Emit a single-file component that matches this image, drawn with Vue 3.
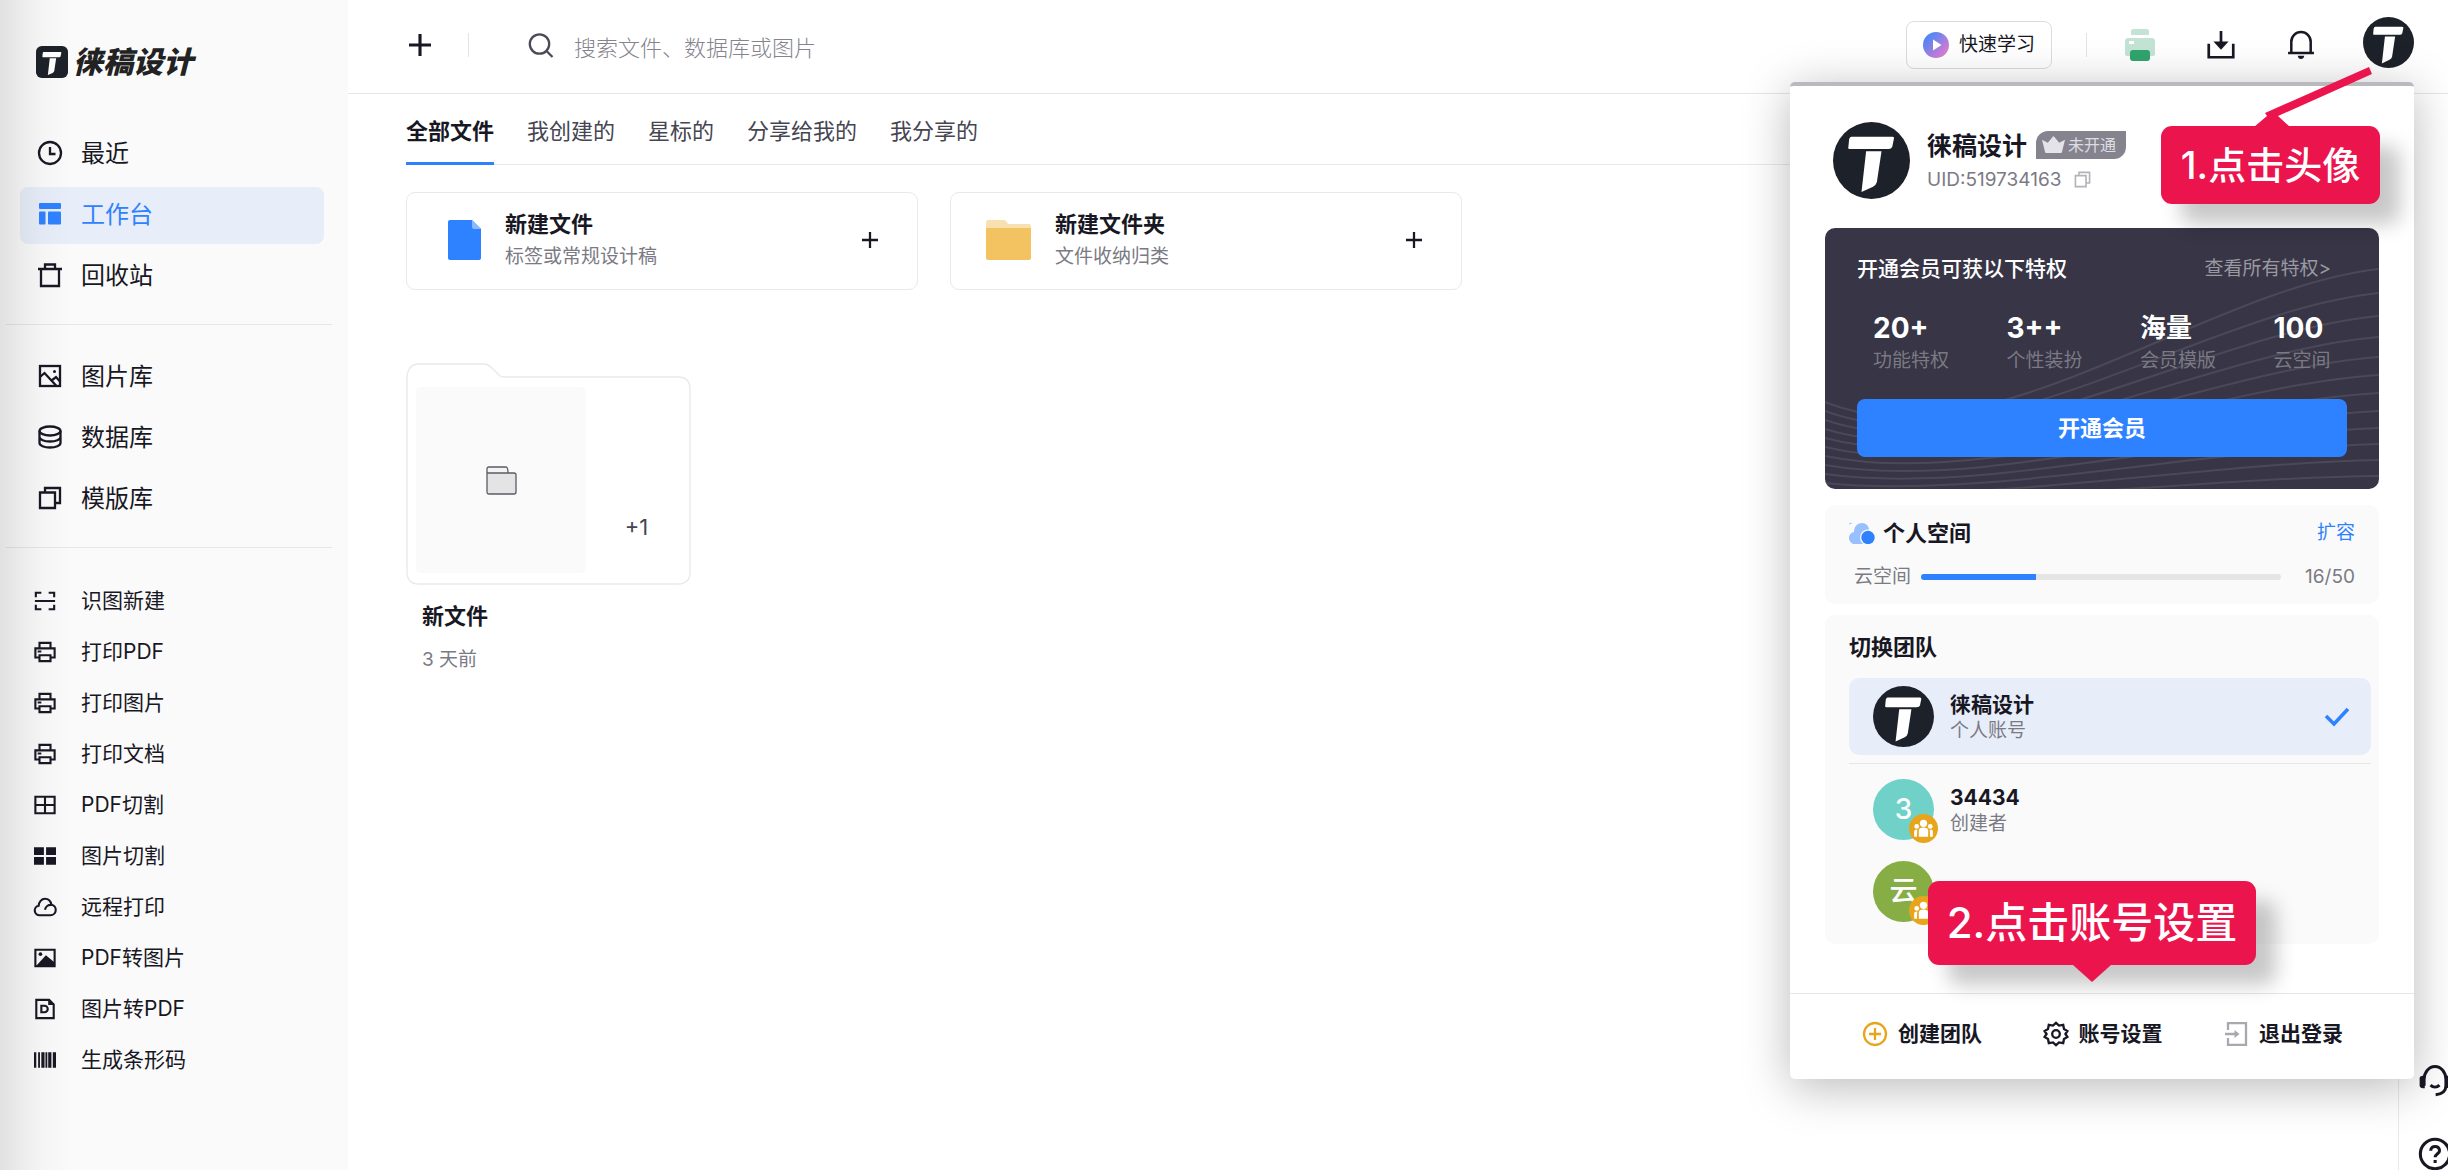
<script setup>
const icons = {
  clock: '<circle cx="12" cy="12" r="11"/><path d="M12 6v7h5.500"/>',
  board: '<g fill="currentColor" stroke="none"><rect x="1" y="1" width="22" height="6" rx="1"/><rect x="1" y="9.500" width="6.500" height="13" rx="1"/><rect x="10" y="9.500" width="13" height="13" rx="1"/></g>',
  trash: '<path d="M0 6h24M3 6v17h18V6M7 6V1.500h10V6"/>',
  image: '<rect x="2" y="2" width="20" height="20"/><path d="M2 13l4.500-4 12 13M13 17l5-4 4 4.500"/><circle cx="16.500" cy="7.500" r="1.500" fill="currentColor" stroke="none"/>',
  data: '<ellipse cx="12" cy="6" rx="10.500" ry="4.500"/><path d="M1.500 6v12c0 2.500 4.700 4.500 10.500 4.500s10.500-2 10.500-4.500V6M1.500 12c0 2.500 4.700 4.500 10.500 4.500s10.500-2 10.500-4.500"/>',
  copy: '<path d="M2 6.500h15V22H2zM7 6V2h15v15h-5"/>',
  scan: '<path d="M2 8V3h6M16 3h6v5M22 16v5h-6M8 21H2v-5M1 12h22"/>',
  printer: '<path d="M6 8V2h12v6M6 18H1.500V8h21v10H18M6 15.500h12V22H6zM4 11.500h4"/>',
  grid: '<path d="M1.500 3h21v18h-21zM12 3v18M1.500 12h21"/>',
  blocks: '<path fill="currentColor" stroke="none" d="M0 2.500h10.800v8.500H0zM13.200 2.500H24v8.500H13.200zM0 13.200h10.800v8.300H0zM13.200 13.200H24v8.300H13.200z"/>',
  cloud: '<path d="M6 21a5.200 5.200 0 0 1-1-10.300C5.300 6.500 8.200 3 12 3c3.600 0 6.200 2.500 7 6.500A5.800 5.800 0 0 1 18 21zM12 15c.5-3.500 3.500-5.500 7-5.300"/>',
  photo: '<path d="M1.500 3h21v18h-21z"/><path d="M2 21l5-5.500 6-6.500 9.500 8v4z" fill="currentColor" stroke="none"/><circle cx="7" cy="7.800" r="2" fill="currentColor" stroke="none"/>',
  pdf: '<path d="M2.500 2h14l5 5v15h-19z"/><path d="M8 8.500h3.500a3.500 3.500 0 0 1 0 7H8z"/><path d="M15.500 1.500l6.500 6h-6.500z" fill="currentColor" stroke="none"/>',
  barcode: '<path fill="currentColor" stroke="none" d="M0 3.500h2.500v17H0zM4.500 3.500h2v17h-2zM8 3.500h3.500v17H8zM12.500 3.500h2v17h-2zM15.500 3.500h3.500v17h-3.500zM20.500 3.500H24v17h-3.500z"/>',
  plus: '<path d="M12 0v24M0 12h24"/>',
  search: '<circle cx="10.500" cy="11" r="9.700"/><path d="M17.500 18l6 6"/>',
  download: '<path d="M1.500 11v11.500h21V11M12 0v10"/><path d="M5.500 9h13L12 16z" fill="currentColor" stroke="none"/>',
  bell: '<path d="M0 20.500h24M3 20V10a9 9 0 0 1 18 0v10"/><path d="M9 23h6q-.5 3-3 3t-3-3z" fill="currentColor" stroke="none"/>',
  check: '<path d="M1 11l8 8L23 4"/>',
  addCircle: '<circle cx="12" cy="12" r="11"/><path d="M12 6v12M6 12h12"/>',
  gear: '<path d="M12 .8l3 2.800 4.200-.8.800 4.200 3.400 2-2 3 2 3-3.400 2-.8 4.200-4.200-.8-3 2.800-3-2.800-4.200.8-.8-4.200-3.400-2 2-3-2-3L4 7l.8-4.200 4.200.8z"/><circle cx="12" cy="12" r="3.800"/>',
  exit: '<path d="M4 8V1.200h18v21.600H4V16M1 12h13"/><path d="M10.500 8l5 4-5 4z" fill="currentColor" stroke="none"/>',
  headset: '<path d="M3.500 17v-5a8.500 10 0 0 1 17 0v5c0 4-3 6.500-8 7M8.500 16.500c2 2 5 2 7 0"/><path d="M0 11q0-2 4-2v10q-4 0-4-2zM24 11q0-2-4-2v10q4 0 4-2z" fill="currentColor" stroke="none"/>',
  help: '<circle cx="12" cy="12" r="11"/><path d="M8.800 9.500c0-4.200 6.600-4.200 6.600 0 0 2.300-3.300 2.300-3.300 5M12.100 16.500v2.200"/>',
  team: '<g fill="currentColor" stroke="none"><circle cx="12" cy="7" r="3.500"/><circle cx="5.500" cy="10" r="2.300"/><circle cx="18.500" cy="10" r="2.300"/><path d="M7.500 20v-6q0-3 4.500-3t4.500 3v6zM3 20v-5q0-2 3-2l-.3 7zM21 20v-5q0-2-3-2l.3 7z"/></g>'
}

const mainNav = [
  { icon: 'clock', label: '最近' },
  { icon: 'board', label: '工作台', active: true },
  { icon: 'trash', label: '回收站' }
]
const libNav = [
  { icon: 'image', label: '图片库' },
  { icon: 'data', label: '数据库' },
  { icon: 'copy', label: '模版库' }
]
const tools = [
  { icon: 'scan', label: '识图新建' },
  { icon: 'printer', label: '打印PDF' },
  { icon: 'printer', label: '打印图片' },
  { icon: 'printer', label: '打印文档' },
  { icon: 'grid', label: 'PDF切割' },
  { icon: 'blocks', label: '图片切割' },
  { icon: 'cloud', label: '远程打印' },
  { icon: 'photo', label: 'PDF转图片' },
  { icon: 'pdf', label: '图片转PDF' },
  { icon: 'barcode', label: '生成条形码' }
]
const tabs = ['全部文件', '我创建的', '星标的', '分享给我的', '我分享的']
const perks = [
  ['20+', '功能特权'],
  ['3++', '个性装扮'],
  ['海量', '会员模版'],
  ['100', '云空间']
]
const used = 16
const quota = 50

const rightEnds = [41, 65, 88, 109, 129, 147, 165, 183, 200, 216, 232, 248]
const waves = rightEnds.map((r, i) => {
  const l = 174 + i * 9
  const k = 1 - i / 12
  return `M0 ${l}C160 ${l + 66 * k} 380 ${r + 19 * k} 554 ${r}`
})
const mark = 'M24 19H77Q80 19 79 22L77 32Q76 35 72 35H22Q19 35 20 32L21 22Q22 19 24 19ZM43 38H63L57 78Q56 82 52 84L37 91Z'
</script>

<template>
  <div class="page">
    <aside class="sidebar">
      <div class="brand">
        <svg class="brand-mark" viewBox="0 0 100 100"><rect width="100" height="100" rx="18" fill="#1d2129" /><path :d="mark" fill="#fff" /></svg>
        <span class="brand-name">徕稿设计</span>
      </div>
      <nav class="nav">
        <a v-for="n in mainNav" :key="n.label" href="#" class="nav-item" :class="{ active: n.active }">
          <svg class="icon" viewBox="0 0 24 24" v-html="icons[n.icon]"></svg><span>{{ n.label }}</span>
        </a>
      </nav>
      <hr class="rule" />
      <nav class="nav">
        <a v-for="n in libNav" :key="n.label" href="#" class="nav-item">
          <svg class="icon" viewBox="0 0 24 24" v-html="icons[n.icon]"></svg><span>{{ n.label }}</span>
        </a>
      </nav>
      <hr class="rule" />
      <nav class="tools">
        <a v-for="n in tools" :key="n.label" href="#" class="tool">
          <svg class="icon" viewBox="0 0 24 24" v-html="icons[n.icon]"></svg><span>{{ n.label }}</span>
        </a>
      </nav>
    </aside>

    <div class="main">
      <header class="topbar">
        <button class="plain" aria-label="新建"><svg class="icon add" viewBox="0 0 24 24" v-html="icons.plus"></svg></button>
        <i class="bar first"></i>
        <label class="search">
          <svg class="icon" viewBox="0 0 24 24" v-html="icons.search"></svg>
          <input type="text" placeholder="搜索文件、数据库或图片" />
        </label>
        <button class="learn">
          <svg viewBox="0 0 26 26">
            <defs><linearGradient id="play" x1="0" y1="0" x2="1" y2="1"><stop offset="0.150" stop-color="#4a86f7" /><stop offset="0.900" stop-color="#e67bd0" /></linearGradient></defs>
            <circle cx="13" cy="13" r="13" fill="url(#play)" /><path d="M10 7.500l8.500 5.500-8.500 5.500z" fill="#fff" />
          </svg>
          <span>快速学习</span>
        </button>
        <i class="bar"></i>
        <div class="actions">
          <button class="plain" aria-label="打印机">
            <svg class="green" viewBox="0 0 30 32"><path d="M6 2q0-2 2-2h14q2 0 2 2v4H6zM3 9h24q3 0 3 3v13q0 2-2 2H2q-2 0-2-2V12q0-3 3-3z" fill="#c3e4d5" /><rect x="4" y="12" width="5" height="3" fill="#fff" /><rect x="5" y="21" width="20" height="11" rx="3" fill="#30a46c" /></svg>
          </button>
          <button class="plain" aria-label="下载"><svg class="icon down" viewBox="0 0 24 24" v-html="icons.download"></svg></button>
          <button class="plain" aria-label="通知"><svg class="icon bell" viewBox="0 0 24 26" v-html="icons.bell"></svg></button>
          <button class="plain" aria-label="头像"><svg class="avatar top" viewBox="0 0 100 100"><circle cx="50" cy="50" r="50" fill="#1d2129" /><path :d="mark" fill="#fff" /></svg></button>
        </div>
      </header>

      <div class="workspace">
        <main class="content">
          <div class="tabs">
            <button v-for="(t, i) in tabs" :key="t" class="tab" :class="{ current: i === 0 }">{{ t }}</button>
          </div>
          <div class="creators">
            <button class="creator file">
              <svg viewBox="0 0 33 40"><path d="M2 0h22l9 9v29q0 2-2 2H2q-2 0-2-2V2q0-2 2-2z" fill="#2f82ff" /><path d="M24 0l9 9h-7q-2 0-2-2z" fill="#8bb8ff" /></svg>
              <span class="creator-text"><b>新建文件</b><small>标签或常规设计稿</small></span>
              <svg class="icon small-plus" viewBox="0 0 24 24" v-html="icons.plus"></svg>
            </button>
            <button class="creator dir">
              <svg viewBox="0 0 45 40"><path d="M2 0h16q2 0 4 4h21q2 0 2 2v6H0V2q0-2 2-2z" fill="#f8e1b1" /><path d="M0 8h45v30q0 2-2 2H2q-2 0-2-2z" fill="#f4c361" /></svg>
              <span class="creator-text"><b>新建文件夹</b><small>文件收纳归类</small></span>
              <svg class="icon small-plus" viewBox="0 0 24 24" v-html="icons.plus"></svg>
            </button>
          </div>
          <article class="folder">
            <div class="folder-body">
              <svg class="outline" viewBox="0 0 285 222"><path d="M1 14Q2 1 13 1H77Q82 1 86 5L92 11Q94 14 98 14H272Q284 14 284 26V209Q284 221 272 221H13Q1 221 1 209Z" fill="#fff" stroke="#e9e9ea" stroke-width="1.300" /></svg>
              <div class="thumb">
                <svg viewBox="0 0 31 29"><path d="M1 7V3q0-2 2-2h17q2 0 2 6h6q2 0 2 2v17q0 2-2 2H3q-2 0-2-2z" fill="#f3f3f3" /><path d="M1 7h29v19q0 2-2 2H3q-2 0-2-2z" fill="#e4e4e4" /><path d="M1 7V3q0-2 2-2h17q2 0 2 6h6q2 0 2 2v17q0 2-2 2H3q-2 0-2-2zM1 7h21" fill="none" stroke="#5c5b66" stroke-width="1.300" /></svg>
              </div>
              <span class="more">+1</span>
            </div>
            <h3>新文件</h3>
            <p>3 天前</p>
          </article>
        </main>
        <aside class="rail">
          <button class="plain" aria-label="客服"><svg class="icon" viewBox="0 0 24 25" v-html="icons.headset"></svg></button>
          <button class="plain" aria-label="帮助"><svg class="icon" viewBox="0 0 24 24" v-html="icons.help"></svg></button>
        </aside>
      </div>
    </div>

    <section class="popup">
      <div class="profile">
        <svg class="avatar big" viewBox="0 0 100 100"><circle cx="50" cy="50" r="50" fill="#1d2129" /><path :d="mark" fill="#fff" /></svg>
        <div class="identity">
          <div class="who">
            <strong>徕稿设计</strong>
            <span class="badge"><svg viewBox="0 0 24 18"><path d="M0 4l6 3 6-7 6 7 6-3-3 12q0 2-2 2H5q-2 0-2-2z" fill="#e4e3e9" /></svg>未开通</span>
          </div>
          <div class="uid">UID:519734163<svg class="icon" viewBox="0 0 24 24" v-html="icons.copy"></svg></div>
        </div>
      </div>

      <div class="vip">
        <svg class="waves" viewBox="0 0 554 261" preserveAspectRatio="none"><path v-for="(w, i) in waves" :key="i" :d="w" /></svg>
        <div class="vip-head"><span>开通会员可获以下特权</span><a href="#">查看所有特权&gt;</a></div>
        <ul class="perks">
          <li v-for="p in perks" :key="p[1]"><b>{{ p[0] }}</b><span>{{ p[1] }}</span></li>
        </ul>
        <button class="buy">开通会员</button>
      </div>

      <div class="space">
        <div class="space-head">
          <svg viewBox="0 0 26 22"><path d="M0 2l3-1" stroke="#a3c7ff" /><path d="M7 22a6 6 0 0 1-2-12C5 4 9 1 13 1s7 3 7 7l2 6v8z" fill="#98c0ff" /><circle cx="19" cy="15.500" r="8" fill="#fafafa" /><circle cx="19" cy="15.500" r="6.700" fill="#2f82ff" /></svg>
          <strong>个人空间</strong><a href="#">扩容</a>
        </div>
        <div class="quota">
          <span>云空间</span>
          <div class="track"><div class="fill" :style="{ width: (used / quota) * 100 + '%' }"></div></div>
          <span class="count">{{ used }}/{{ quota }}</span>
        </div>
      </div>

      <div class="teams">
        <h4>切换团队</h4>
        <button class="team selected">
          <svg class="avatar" viewBox="0 0 100 100"><circle cx="50" cy="50" r="50" fill="#1d2129" /><path :d="mark" fill="#fff" /></svg>
          <span class="team-text"><b>徕稿设计</b><small>个人账号</small></span>
          <svg class="icon tick" viewBox="0 0 24 24" v-html="icons.check"></svg>
        </button>
        <hr />
        <button class="team">
          <span class="initial teal">3<svg class="crew" viewBox="0 0 24 24" v-html="icons.team"></svg></span>
          <span class="team-text"><b>34434</b><small>创建者</small></span>
        </button>
        <button class="team">
          <span class="initial olive">云<svg class="crew" viewBox="0 0 24 24" v-html="icons.team"></svg></span>
        </button>
      </div>

      <footer class="foot">
        <button class="gold"><svg class="icon" viewBox="0 0 24 24" v-html="icons.addCircle"></svg>创建团队</button>
        <button><svg class="icon" viewBox="0 0 24 24" v-html="icons.gear"></svg>账号设置</button>
        <button class="dim"><svg class="icon" viewBox="0 0 24 24" v-html="icons.exit"></svg>退出登录</button>
      </footer>

      <svg class="pointer" viewBox="0 0 120 60"><path d="M0 58L13 47 11 44 115 -2 118 5 24 47 36 58z" fill="#ec144d" /></svg>
      <div class="callout one">1.点击头像</div>
      <div class="callout two">2.点击账号设置</div>
    </section>
  </div>
</template>

<style>
body {
  margin: 0;
  background: #fff;
}
</style>

<style scoped>
* {
  box-sizing: border-box;
}
.page {
  position: relative;
  display: flex;
  min-height: 100vh;
  overflow: hidden;
  color: #181724;
  font-family: Inter, "Noto Sans CJK SC", sans-serif;
  font-size: 19px;
  line-height: 28px;
}
a {
  color: inherit;
  text-decoration: none;
}
button {
  padding: 0;
  border: 0;
  background: none;
  color: inherit;
  font: inherit;
  text-align: left;
}
hr {
  margin: 0;
  border: 0;
  border-top: 1px solid #e6e6e7;
}
svg {
  display: block;
  flex: none;
}
.icon {
  overflow: visible;
  fill: none;
  stroke: currentColor;
  stroke-width: 2.3;
}

.sidebar {
  position: relative;
  flex: none;
  width: 348px;
  background: #fafafa;
}
.sidebar::after {
  content: "";
  position: absolute;
  inset: 0 auto 0 0;
  width: 72px;
  background: linear-gradient(90deg, rgba(0, 0, 0, 0.1), rgba(0, 0, 0, 0.05) 24px, rgba(0, 0, 0, 0.02) 44px, transparent);
  pointer-events: none;
}
.brand {
  display: flex;
  align-items: center;
  gap: 5px;
  height: 126px;
  padding: 0 36px 2px;
}
.brand-mark {
  width: 32px;
  height: 32px;
}
.brand-name {
  font-size: 30px;
  font-weight: 900;
  font-style: italic;
  line-height: 32px;
  color: #222;
}
.nav {
  display: flex;
  flex-direction: column;
  gap: 4px;
  padding: 0 24px 0 20px;
}
.nav-item {
  display: flex;
  align-items: center;
  gap: 19px;
  height: 57px;
  padding: 0 0 1px 18px;
  border-radius: 8px;
  font-size: 24px;
}
.nav-item .icon {
  width: 24px;
  height: 24px;
  margin-bottom: 3px;
}
.nav-item.active {
  background: #e8eef9;
  color: #2f82ff;
}
.rule {
  margin: 19px 16px 24px 6px;
}
.nav + .rule + .tools {
  margin-top: 28px;
}
.tool {
  display: flex;
  align-items: center;
  gap: 25px;
  height: 51px;
  padding: 0 0 2px 34px;
  font-size: 21px;
}
.tool .icon {
  width: 22px;
  height: 22px;
}

.main {
  display: flex;
  flex: 1;
  flex-direction: column;
  min-width: 0;
}
.topbar {
  display: flex;
  align-items: center;
  height: 94px;
  padding: 0 34px 4px 61px;
  border-bottom: 1px solid #e6e6e7;
}
.add {
  width: 22px;
  height: 22px;
  stroke-width: 3.4;
}
.bar {
  width: 1px;
  height: 24px;
  background: #e4e4e6;
}
.bar.first {
  margin: 0 60px 0 37px;
}
.search {
  display: flex;
  flex: 1;
  align-items: center;
  gap: 21px;
}
.search .icon {
  width: 24px;
  height: 24px;
  color: #4b4a57;
}
.search input {
  flex: 1;
  min-width: 0;
  height: 42px;
  padding: 6px 0 0;
  border: 0;
  outline: 0;
  background: none;
  font: 300 22px/36px Inter, "Noto Sans CJK SC", sans-serif;
}
.search input::placeholder {
  color: #85848d;
}
.learn {
  display: flex;
  align-items: center;
  gap: 10px;
  height: 48px;
  margin-right: 34px;
  padding: 0 16px;
  border: 1px solid #dcdcdf;
  border-radius: 8px;
}
.learn svg {
  width: 26px;
  height: 26px;
}
.actions {
  display: flex;
  align-items: center;
  padding-left: 38px;
  gap: 52px;
}
.actions .green {
  width: 30px;
  height: 32px;
}
.down,
.bell {
  width: 28px;
  height: 28px;
}
.actions button:last-child {
  margin: 0 0 4px -4px;
}
.avatar.top {
  width: 51px;
  height: 51px;
}

.workspace {
  display: flex;
  flex: 1;
}
.content {
  flex: 1;
  padding-left: 58px;
}
.tabs {
  display: flex;
  gap: 33px;
  height: 71px;
  border-bottom: 1px solid #e9e9ea;
}
.tab {
  height: 71px;
  padding-top: 6px;
  border-bottom: 3px solid transparent;
  font-size: 22px;
  color: #464552;
}
.tab.current {
  border-color: #2f82ff;
  font-weight: 700;
  color: #181724;
}
.creators {
  display: flex;
  gap: 32px;
  margin-top: 27px;
}
.creator {
  display: flex;
  align-items: center;
  gap: 24px;
  width: 512px;
  height: 98px;
  padding: 0 39px 2px 41px;
  border: 1px solid #e9e9ea;
  border-radius: 9px;
}
.creator.dir {
  padding-left: 35px;
}
.creator svg:first-child {
  height: 40px;
}
.creator-text,
.team-text {
  display: flex;
  flex: 1;
  flex-direction: column;
}
.creator-text b {
  font-size: 22px;
  line-height: 34px;
}
small {
  font-size: 19px;
  line-height: 32px;
  color: #7b7a84;
}
.small-plus {
  width: 16px;
  height: 16px;
  stroke-width: 3.4;
}
.folder {
  width: 285px;
  margin-top: 73px;
}
.folder-body {
  position: relative;
  display: flex;
  height: 221px;
  padding: 24px 10px 11px;
}
.outline {
  position: absolute;
  inset: 0;
  width: 285px;
  height: 222px;
}
.thumb {
  position: relative;
  display: grid;
  place-items: center;
  width: 170px;
  border-radius: 4px;
  background: #fafafa;
}
.thumb svg {
  width: 31px;
}
.more {
  position: relative;
  flex: 1;
  align-self: flex-end;
  padding: 0 0 32px 6px;
  text-align: center;
  font-size: 22px;
  color: #464552;
}
.folder h3 {
  margin: 17px 16px 0;
  font-size: 22px;
  line-height: 30px;
}
.folder p {
  margin: 15px 16px 0;
  color: #7b7a84;
}
.rail {
  display: flex;
  flex: none;
  flex-direction: column;
  justify-content: flex-end;
  gap: 42px;
  width: 50px;
  padding-left: 20px;
  border-left: 1px solid #e9e9ea;
}
.rail .icon {
  width: 32px;
  height: 32px;
}

.popup {
  position: absolute;
  top: 82px;
  right: 34px;
  width: 624px;
  border-top: 4px solid #bab9c0;
  border-radius: 5px;
  background: #fff;
  box-shadow: 0 8px 48px rgba(0, 0, 0, 0.28);
}
.profile {
  display: flex;
  align-items: center;
  gap: 17px;
  height: 142px;
  padding: 7px 43px 0;
}
.avatar.big {
  width: 77px;
  height: 77px;
}
.identity {
  padding-top: 4px;
}
.who {
  display: flex;
  align-items: center;
  gap: 9px;
}
.who strong {
  font-size: 25px;
  line-height: 34px;
}
.badge {
  display: flex;
  align-items: center;
  gap: 3px;
  width: 90px;
  height: 28px;
  margin-bottom: 2px;
  padding-left: 6px;
  border-radius: 12px 0;
  background: #85848e;
  color: #dddce2;
  font-size: 16px;
}
.badge svg {
  width: 23px;
}
.uid {
  display: flex;
  align-items: center;
  gap: 13px;
  height: 34px;
  font-size: 19px;
  color: #7b7a84;
}
.uid .icon {
  width: 17px;
  height: 17px;
  color: #b4b3ba;
}
.vip {
  position: relative;
  height: 261px;
  margin: 0 35px;
  padding: 27px 32px 0;
  border-radius: 10px;
  background: #373546;
  color: #fff;
}
.waves {
  position: absolute;
  inset: 0;
  width: 100%;
  height: 100%;
  fill: none;
  stroke: rgba(255, 255, 255, 0.1);
  stroke-width: 2;
}
.vip-head,
.perks,
.buy {
  position: relative;
}
.vip-head {
  display: flex;
  justify-content: space-between;
  padding-right: 16px;
  font-size: 21px;
  font-weight: 500;
}
.vip-head a {
  font-size: 19px;
  font-weight: 400;
  color: #9a99a2;
}
.perks {
  display: grid;
  grid-template-columns: repeat(4, 1fr);
  margin: 27px -60px 0 16px;
  padding: 0;
  list-style: none;
}
.perks li {
  display: flex;
  flex-direction: column;
}
.perks b {
  font-size: 28px;
  line-height: 36px;
}
.perks li:nth-child(3) b {
  font-size: 26px;
}
.perks span {
  line-height: 30px;
  color: #7b7a84;
}
.buy {
  width: 100%;
  height: 58px;
  margin-top: 23px;
  border-radius: 8px;
  background: #2f82ff;
  font-size: 22px;
  font-weight: 700;
  text-align: center;
}
.space,
.teams {
  margin: 16px 35px 0;
  border-radius: 10px;
  background: #fafafa;
}
.space {
  height: 99px;
  padding: 12px 24px;
}
.space-head,
.quota {
  display: flex;
  align-items: center;
}
.space-head svg {
  width: 26px;
}
.space-head strong {
  flex: 1;
  margin-left: 8px;
  font-size: 22px;
  line-height: 32px;
}
.space-head a {
  color: #2f82ff;
}
.quota {
  gap: 10px;
  margin-top: 14px;
  padding-left: 5px;
  color: #7b7a84;
}
.track {
  flex: 1;
  height: 6px;
  border-radius: 3px;
  overflow: hidden;
  background: #e5e5e5;
}
.fill {
  height: 6px;
  background: #2f82ff;
}
.count {
  width: 64px;
  text-align: right;
}
.teams {
  height: 329px;
  margin-top: 11px;
  padding: 15px 8px 0 24px;
}
.teams h4 {
  margin: 0 0 14px;
  font-size: 22px;
  line-height: 34px;
}
.teams hr {
  margin: 8px 0 7px;
}
.team {
  display: flex;
  align-items: center;
  gap: 16px;
  width: 100%;
  height: 77px;
  padding: 0 22px 0 24px;
  border-radius: 10px;
}
.team + .team {
  margin-top: 5px;
}
.team.selected {
  background: #e8eef9;
}
.team .avatar {
  width: 61px;
  height: 61px;
}
.team-text {
  padding-top: 3px;
}
.team b {
  font-size: 21px;
  line-height: 26px;
}
.team small {
  line-height: 26px;
}
.tick {
  width: 24px;
  height: 24px;
  color: #2f82ff;
  stroke-width: 3.6;
}
.initial {
  position: relative;
  width: 61px;
  height: 61px;
  border-radius: 50%;
  color: #fff;
  font-size: 28px;
  font-weight: 500;
  line-height: 61px;
  text-align: center;
}
.teal {
  background: #70d1c9;
}
.olive {
  background: #87ae45;
}
.crew {
  position: absolute;
  right: -4px;
  bottom: -3px;
  width: 29px;
  height: 29px;
  padding: 2px;
  border-radius: 50%;
  background: #e8a51c;
}
.foot {
  display: flex;
  justify-content: space-between;
  height: 86px;
  margin-top: 49px;
  padding: 0 71px 5px 73px;
  border-top: 1px solid #e6e6e7;
}
.foot button {
  display: flex;
  align-items: center;
  gap: 11px;
  font-size: 21px;
  font-weight: 700;
}
.foot .icon {
  width: 24px;
  height: 24px;
}
.gold .icon {
  color: #e8a51c;
}
.dim .icon {
  color: #a9a8ae;
}

.callout {
  position: absolute;
  border-radius: 11px;
  background: #ec144d;
  box-shadow: 20px 20px 20px rgba(0, 0, 0, 0.22);
  color: #fff;
  font-weight: 500;
  white-space: nowrap;
  text-align: center;
}
.callout.one {
  top: 40px;
  right: 34px;
  width: 219px;
  font-size: 38px;
  line-height: 78px;
}
.callout.two {
  top: 795px;
  right: 158px;
  width: 328px;
  font-size: 42px;
  line-height: 84px;
}
.callout.two::after {
  content: "";
  position: absolute;
  top: 100%;
  left: 50%;
  margin-left: -19px;
  border: 19px solid transparent;
  border-top: 17px solid #ec144d;
  border-bottom: 0;
}
.pointer {
  position: absolute;
  top: -17px;
  right: 40px;
  width: 120px;
  height: 60px;
  overflow: visible;
}
</style>
